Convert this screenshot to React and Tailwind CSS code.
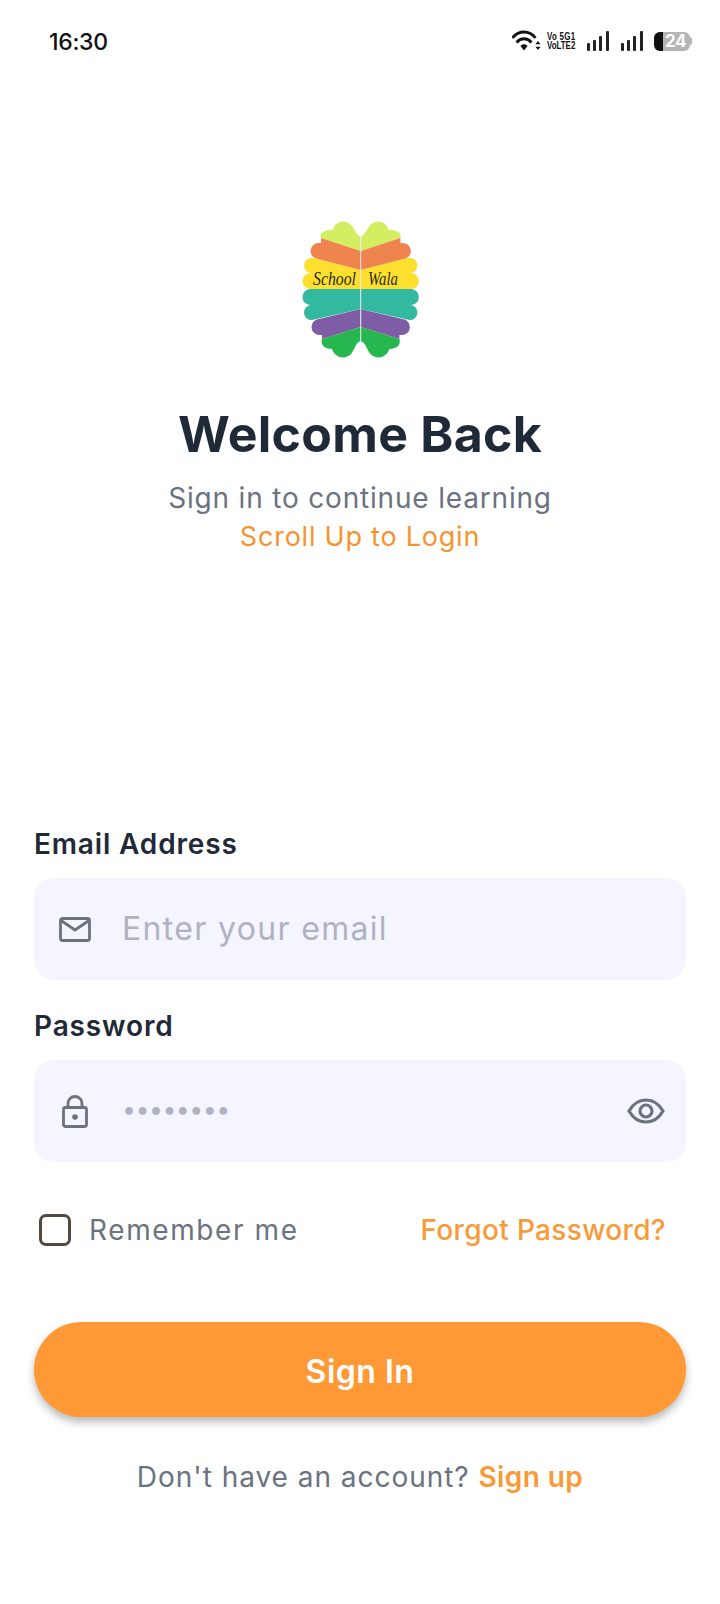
import React from "react";

const sans = "font-['Inter','Noto_Sans',sans-serif]";

// One half of the brain-shaped emblem; the other half is its mirror image.
function EmblemHalf() {
  return (
    <>
      <path fill="#d4ee62" d="M75.7 27C72 26 70 19 66 15C60 9 50 11 48 20C41 19 34 23 36 28L75.7 41Z" />
      <path fill="#fddf2e" d="M75.7 60L33 49L27 48A7.5 7.5 0 0 0 26 63A8 8 0 0 0 25 79H75.7Z" />
      <path fill="#f0844e" d="M36 28L75.7 41V60L33 49A8 8 0 0 1 34 33L36 33Z" />
      <path fill="#7f5ca6" d="M75.7 99L34 109A8 8 0 0 0 35 125L37 125V129L75.7 117Z" />
      <path fill="#32b9a0" d="M75.7 79H25A8 8 0 0 0 26 95A7.5 7.5 0 0 0 27 110L75.7 99Z" />
      <path fill="#26b84e" d="M75.7 117L37 129C35 135 40 139 47 139C50 148 60 150 66 144C70 139 71 132 75.7 131Z" />
    </>
  );
}

function Emblem() {
  return (
    <svg width="150" height="160" viewBox="0 0 150 160" className="block">
      <EmblemHalf />
      <g transform="translate(151.4 0) scale(-1 1)">
        <EmblemHalf />
      </g>
      <rect x="75.2" y="27" width="1" height="105" fill="#ece6f4" />
      <text x="28" y="75" fontSize="19" fontStyle="italic" fontFamily="Liberation Serif, serif" fill="#2b2a1c" textLength="43" lengthAdjust="spacingAndGlyphs">School</text>
      <text x="83" y="75" fontSize="19" fontStyle="italic" fontFamily="Liberation Serif, serif" fill="#2b2a1c" textLength="30" lengthAdjust="spacingAndGlyphs">Wala</text>
    </svg>
  );
}

function WifiIcon() {
  return (
    <svg width="29" height="22" viewBox="0 0 29 22" fill="none" className="block">
      <path d="M0.5 8C6.5 0 17.5 0 23.5 8" stroke="#111" strokeWidth="2.8" />
      <path d="M4.5 12.5C9 7.5 15 7.5 19.5 12.5" stroke="#111" strokeWidth="2.8" />
      <path d="M8.4 16C10.6 13.8 13.4 13.8 15.6 16L12 20.5Z" fill="#111" />
      <path d="M26 11L28.6 14.2H23.4ZM26 20L23.4 16.8H28.6Z" fill="#111" />
    </svg>
  );
}

function SignalIcon() {
  return (
    <svg width="22" height="20" viewBox="0 0 22 20" className="block">
      <rect x="0" y="12" width="3" height="8" rx="1" fill="#222" />
      <rect x="6" y="9" width="3" height="11" rx="1" fill="#222" />
      <rect x="12" y="5" width="3" height="15" rx="1" fill="#222" />
      <rect x="19" y="0" width="3" height="20" rx="1" fill="#222" />
    </svg>
  );
}

function StatusBar() {
  return (
    <div className={`h-[82px] pt-[30px] pl-[49px] pr-[28px] flex justify-between items-start ${sans}`}>
      <span className="text-[23px] leading-[24px] font-medium text-[#111] tracking-[-0.3px]">16:30</span>
      <div className="flex items-center h-[22px]">
        <WifiIcon />
        <div className="ml-[6px] w-[31px] flex flex-col text-[11px] leading-[9px] font-bold text-[#111] font-['Liberation_Sans',sans-serif] origin-left scale-x-[0.72]">
          <span className="whitespace-nowrap tracking-[0.4px]">Vo 5G1</span>
          <span className="whitespace-nowrap">VoLTE2</span>
        </div>
        <div className="ml-[9px]"><SignalIcon /></div>
        <div className="ml-[12px]"><SignalIcon /></div>
        <div className="ml-[11px] flex items-center">
          <div className="relative w-[36px] h-[19px] rounded-[6px] bg-[#b5b5b5] overflow-hidden flex items-center justify-end pr-[4px]">
            <div className="absolute left-0 top-0 bottom-0 w-[9px] bg-[#111]" />
            <span className="relative text-[17px] leading-[19px] font-bold text-white tracking-[-0.5px]">24</span>
          </div>
          <div className="w-[2px] h-[8px] rounded-r-[2px] bg-[#b5b5b5]" />
        </div>
      </div>
    </div>
  );
}

function MailIcon() {
  return (
    <svg width="32" height="25" viewBox="0 0 32 25" fill="none" stroke="#6b7280" strokeWidth="2.8" strokeLinejoin="round" className="block">
      <rect x="1.5" y="1.5" width="29" height="22" rx="2" />
      <path d="M2 3.5L16 13L30 3.5" />
    </svg>
  );
}

function LockIcon() {
  return (
    <svg width="26" height="33" viewBox="0 0 26 33" fill="none" stroke="#6b7280" strokeWidth="2.8" className="block">
      <rect x="1.5" y="12.5" width="23" height="19" rx="2" />
      <path d="M6 12.5V8.5C6 4.5 9 1.5 13 1.5C17 1.5 20 4.5 20 8.5V12.5" />
      <circle cx="13" cy="22" r="2.8" fill="#6b7280" stroke="none" />
    </svg>
  );
}

function EyeIcon() {
  return (
    <svg width="38" height="26" viewBox="0 0 38 26" fill="none" stroke="#6b7280" strokeWidth="3.2" className="block">
      <path d="M2 13C6 6 12 2 19 2C26 2 32 6 36 13C32 20 26 24 19 24C12 24 6 20 2 13Z" />
      <circle cx="19" cy="13" r="6" />
    </svg>
  );
}

function Field({ label, icon, trailing, type, placeholder, inputClass }) {
  return (
    <div>
      <label className="block h-[34px] text-[28px] leading-[34px] font-semibold text-[#1f2937] tracking-[0.85px]">{label}</label>
      <div className="mt-[17px] h-[102px] rounded-[20px] bg-[#f4f5fe] flex items-center pl-[25px] pr-[21px]">
        <div className="w-[32px] flex justify-center shrink-0">{icon}</div>
        <input
          type={type}
          placeholder={placeholder}
          readOnly
          className={`ml-[31px] flex-1 min-w-0 bg-transparent outline-none ${inputClass}`}
        />
        {trailing}
      </div>
    </div>
  );
}

export default function App() {
  return (
    <div className={`w-[720px] h-[1604px] bg-white overflow-hidden ${sans}`}>
      <StatusBar />

      <div className="flex flex-col items-center pt-[128px]">
        <Emblem />
        <h1 className="mt-[34px] text-[50px] leading-[60px] font-bold text-[#1f2937] tracking-[0.27px]">Welcome Back</h1>
        <p className="mt-[14px] text-[28px] leading-[40px] text-[#6b7280] tracking-[0.82px]">Sign in to continue learning</p>
        <p className="text-[27px] leading-[38px] text-[#f7932f] tracking-[0.77px]">Scroll Up to Login</p>
      </div>

      <div className="mt-[271px] px-[34px]">
        <Field
          label="Email Address"
          icon={<MailIcon />}
          type="email"
          placeholder="Enter your email"
          inputClass="text-[32px] tracking-[1.33px] placeholder:text-[#b0b2c3]"
        />
        <div className="mt-[29px]">
          <Field
            label="Password"
            icon={<LockIcon />}
            trailing={<EyeIcon />}
            type="password"
            placeholder="••••••••"
            inputClass="text-[25px] tracking-[-0.6px] pb-[3px] placeholder:text-[#b0b2c3]"
          />
        </div>

        <div className="mt-[52px] h-[32px] flex items-center pl-[5px] pr-[20px]">
          <div className="w-[32px] h-[32px] rounded-[7px] border-[3px] border-[#54483f]" />
          <span className="ml-[18px] text-[28px] text-[#6b7280] tracking-[1.6px]">Remember me</span>
          <span className="ml-auto text-[28px] font-medium text-[#f99a38] tracking-[0.35px]">Forgot Password?</span>
        </div>

        <button className="mt-[76px] w-full h-[95px] pt-[5px] rounded-full bg-[#fe9935] text-white text-[32px] tracking-[0.5px] font-semibold shadow-[0_5px_9px_rgba(0,0,0,0.28)]">
          Sign In
        </button>

        <p className="mt-[41px] text-center text-[28px] leading-[38px] text-[#6b7280] tracking-[0.97px]">
          Don't have an account? <span className="font-semibold text-[#f99a38] tracking-[0.4px]">Sign up</span>
        </p>
      </div>
    </div>
  );
}
